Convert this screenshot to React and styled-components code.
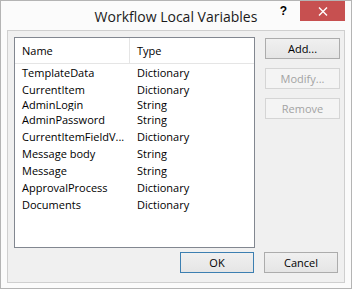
import React from "react";
import styled, { createGlobalStyle } from "styled-components";

const GlobalStyle = createGlobalStyle`
  html, body { margin: 0; padding: 0; background: #ffffff; }
  body { font-family: "Open Sans", "Noto Sans", sans-serif; }
`;

const variables = [
  { name: "TemplateData", type: "Dictionary" },
  { name: "CurrentItem", type: "Dictionary" },
  { name: "AdminLogin", type: "String", tight: true },
  { name: "AdminPassword", type: "String" },
  { name: "CurrentItemFieldV...", type: "Dictionary" },
  { name: "Message body", type: "String" },
  { name: "Message", type: "String" },
  { name: "ApprovalProcess", type: "Dictionary" },
  { name: "Documents", type: "Dictionary" },
];

const Window = styled.div`
  box-sizing: border-box;
  width: 352px;
  height: 289px;
  border: 1px solid #b4b4b4;
  background: #fbfbfb;
  display: flex;
  flex-direction: column;
`;

const TitleBar = styled.div`
  position: relative;
  height: 29px;
  display: flex;
  align-items: center;
  justify-content: center;
`;

const Title = styled.div`
  font-size: 14px;
  color: #1a1a1a;
  margin-top: 1px;
`;

const Caption = styled.div`
  position: absolute;
  top: 0;
  right: 6px;
  display: flex;
`;

const HelpButton = styled.div`
  width: 27px;
  height: 20px;
  display: flex;
  align-items: center;
  justify-content: center;
  font-family: "Liberation Sans", sans-serif;
  font-weight: bold;
  font-size: 12px;
  color: #000;
  padding-right: 6px;
  box-sizing: border-box;
`;

const CloseButton = styled.div`
  width: 45px;
  height: 20px;
  background: #c75050;
  display: flex;
  align-items: center;
  justify-content: center;
`;

const Client = styled.div`
  box-sizing: border-box;
  margin: 0 6px 5px 6px;
  height: 253px;
  border: 1px solid #cfcfcf;
  background: #f0f0f0;
  padding: 6px 4px 8px 6px;
  display: flex;
  flex-direction: column;
`;

const Top = styled.div`
  display: flex;
  gap: 10px;
`;

const List = styled.div`
  box-sizing: border-box;
  width: 241px;
  height: 211px;
  border: 1px solid #828790;
  background: #ffffff;
  font-size: 11px;
  color: #000;
`;

const HeaderRow = styled.div`
  display: flex;
  height: 25px;
  border-bottom: 1px solid #e5e5e5;
  align-items: center;
`;

const Row = styled.div`
  display: flex;
  height: ${(p) => (p.$tight ? 13 : 17)}px;
  align-items: center;
`;

const NameCell = styled.div`
  box-sizing: border-box;
  width: 115px;
  padding-left: 7px;
  white-space: nowrap;
  overflow: hidden;
  align-self: stretch;
  display: flex;
  align-items: center;
  border-right: ${(p) => (p.$head ? "1px solid #e5e5e5" : "none")};
`;

const TypeCell = styled.div`
  padding-left: 7px;
  white-space: nowrap;
`;

const SideButtons = styled.div`
  display: flex;
  flex-direction: column;
  gap: 9px;
  padding-top: 1px;
`;

const Button = styled.button`
  box-sizing: border-box;
  width: ${(p) => p.$w || 75}px;
  height: 21px;
  margin: 0;
  padding: 0 0 1px;
  font-family: "Open Sans", "Noto Sans", sans-serif;
  font-size: 11px;
  color: ${(p) => (p.disabled ? "#a3a3a3" : "#000")};
  border: 1px solid ${(p) => (p.disabled ? "#d5d5d5" : p.$focus ? "#3c7fb1" : "#acacac")};
  background: ${(p) =>
    p.disabled ? "#f4f4f4" : "linear-gradient(#f0f0f0, #e5e5e5)"};
`;

const Bottom = styled.div`
  display: flex;
  justify-content: flex-end;
  gap: 10px;
  margin-top: 4px;
  padding-right: 2px;
`;

export default function App() {
  return (
    <>
      <GlobalStyle />
      <Window>
        <TitleBar>
          <Title>Workflow Local Variables</Title>
          <Caption>
            <HelpButton>?</HelpButton>
            <CloseButton>
              <svg width="10" height="9" viewBox="0 0 10 9">
                <path d="M1 0.5 L9 8.5 M9 0.5 L1 8.5" stroke="#fff" strokeWidth="1.4" />
              </svg>
            </CloseButton>
          </Caption>
        </TitleBar>
        <Client>
          <Top>
            <List>
              <HeaderRow>
                <NameCell $head>Name</NameCell>
                <TypeCell>Type</TypeCell>
              </HeaderRow>
              {variables.map((v) => (
                <Row key={v.name} $tight={v.tight}>
                  <NameCell>{v.name}</NameCell>
                  <TypeCell>{v.type}</TypeCell>
                </Row>
              ))}
            </List>
            <SideButtons>
              <Button>Add...</Button>
              <Button disabled>Modify...</Button>
              <Button disabled>Remove</Button>
            </SideButtons>
          </Top>
          <Bottom>
            <Button $w={74} $focus>OK</Button>
            <Button $w={74}>Cancel</Button>
          </Bottom>
        </Client>
      </Window>
    </>
  );
}
